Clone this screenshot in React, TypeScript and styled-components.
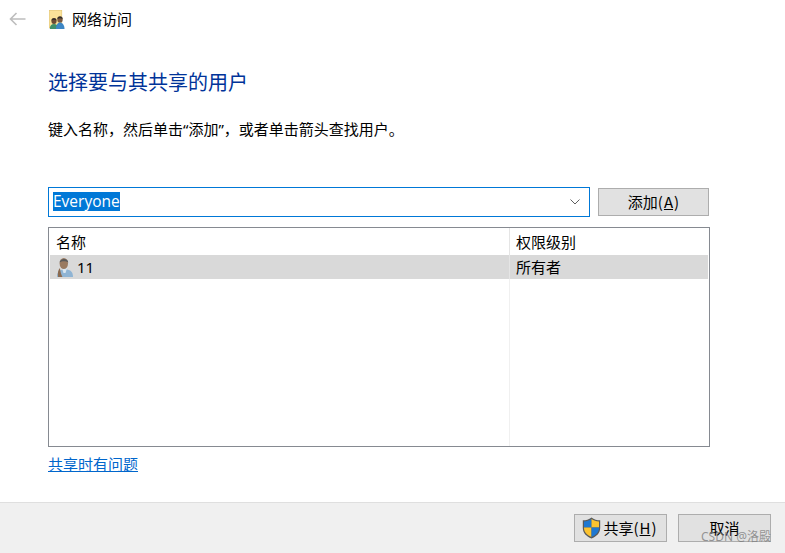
import { FC } from 'react';
import styled, { createGlobalStyle } from 'styled-components';

const GlobalStyle = createGlobalStyle`
  html, body {
    margin: 0;
    padding: 0;
    background: #fff;
  }
  body {
    font-family: 'Noto Sans', 'Noto Sans CJK SC', sans-serif;
    color: #000;
  }
`;

const Page = styled.div`
  position: relative;
  width: 785px;
  height: 553px;
  display: flex;
  flex-direction: column;
  overflow: hidden;
`;

const TitleBar = styled.div`
  height: 38px;
  padding-left: 9px;
  display: flex;
  align-items: center;
  flex-shrink: 0;
`;

const BackButton = styled.div`
  width: 17px;
  height: 14px;
  margin-right: 23px;
  color: #bdbdbd;
  display: flex;
`;

const TitleText = styled.span`
  margin-left: 7px;
  font-size: 15px;
  line-height: 18px;
`;

const Content = styled.div`
  flex: 1;
  padding: 31px 75px 0 48px;
  display: flex;
  flex-direction: column;
`;

const Heading = styled.h1`
  margin: 0;
  font-size: 20px;
  font-weight: 400;
  line-height: 28px;
  color: #003399;
`;

const Hint = styled.p`
  margin: 23px 0 0;
  font-size: 15px;
  line-height: 18px;
`;

const PickerRow = styled.div`
  margin-top: 49px;
  display: flex;
  align-items: center;
  gap: 8px;
`;

const Combo = styled.div`
  box-sizing: border-box;
  width: 542px;
  height: 30px;
  border: 1px solid #0078d7;
  padding: 0 9px 0 4px;
  display: flex;
  align-items: center;
  justify-content: space-between;
`;

const Selected = styled.span`
  background: #0078d7;
  color: #fff;
  font-family: 'Open Sans', 'Noto Sans', sans-serif;
  font-size: 15.5px;
  line-height: 19px;
  margin-top: -1px;
`;

const Button = styled.button<{ $wide?: boolean }>`
  box-sizing: border-box;
  width: ${(p) => (p.$wide ? '111px' : '93px')};
  height: 28px;
  padding: 0 0 2px;
  border: 1px solid #adadad;
  background: #e1e1e1;
  font-family: 'Noto Sans CJK SC', 'Noto Sans', sans-serif;
  font-size: 15px;
  color: #000;
  display: flex;
  align-items: center;
  justify-content: center;
  gap: 1px;
`;

const Hotkey = styled.span`
  text-decoration: underline;
`;

const ShieldSlot = styled.span`
  display: flex;
  margin: 2px 1px 0 -2px;
`;

const List = styled.div`
  box-sizing: border-box;
  width: 662px;
  height: 220px;
  margin-top: 10px;
  border: 1px solid #868a91;
  padding: 0 1px;
  display: flex;
  flex-direction: column;
`;

const ListRow = styled.div<{ $selected?: boolean }>`
  height: ${(p) => (p.$selected ? '24px' : '27px')};
  background: ${(p) => (p.$selected ? '#d9d9d9' : 'transparent')};
  display: grid;
  grid-template-columns: 459px 1fr;
  flex-shrink: 0;
`;

const Cell = styled.div<{ $second?: boolean }>`
  display: flex;
  align-items: center;
  padding-left: 6px;
  border-left: ${(p) => (p.$second ? '1px solid #e5e5e5' : 'none')};
  font-size: 15px;
  line-height: 18px;
`;

const UserName = styled.span`
  margin-left: 3px;
  font-size: 15px;
`;

const ListBody = styled.div`
  flex: 1;
  display: grid;
  grid-template-columns: 459px 1fr;
`;

const EmptyColumn = styled.div<{ $second?: boolean }>`
  border-left: ${(p) => (p.$second ? '1px solid #f0f0f0' : 'none')};
`;

const HelpLink = styled.a`
  align-self: flex-start;
  margin-top: 8px;
  font-size: 15px;
  line-height: 18px;
  color: #0066cc;
  text-decoration: underline;
`;

const Footer = styled.div`
  box-sizing: border-box;
  height: 51px;
  flex-shrink: 0;
  background: #f0f0f0;
  border-top: 1px solid #dfdfdf;
  padding: 11px 14px 0 0;
  display: flex;
  justify-content: flex-end;
  align-items: flex-start;
  gap: 11px;
`;

const Watermark = styled.span`
  position: absolute;
  right: 14px;
  bottom: 9px;
  font-family: 'Noto Sans', 'Noto Sans CJK SC', sans-serif;
  font-size: 12px;
  line-height: 14px;
  color: rgba(120, 120, 120, 0.75);
`;

const BackArrow: FC = () => (
  <svg width="17" height="14" viewBox="0 0 17 14" fill="none" stroke="currentColor" strokeWidth="1.6">
    <path d="M1.5 7H16.5M7.5 1L1.5 7L7.5 13" />
  </svg>
);

const NetworkIcon: FC = () => (
  <svg width="16" height="19" viewBox="0 0 16 19">
    <rect x="0.3" y="0.3" width="12.5" height="17.5" fill="#fbe39a" stroke="#e3c36a" strokeWidth="0.6" />
    <ellipse cx="5" cy="11" rx="2.6" ry="3" fill="#6b4a34" />
    <path d="M2.4 10.500C2.800 7.600 7.200 7.600 7.600 10.500C6 9.600 4 9.600 2.400 10.500z" fill="#33302c" />
    <path d="M0.800 19c0-3.500 1.600-5 4.200-5s4.200 1.500 4.200 5z" fill="#3f8f6a" />
    <ellipse cx="11" cy="9.500" rx="2.7" ry="3.2" fill="#7a5a42" />
    <path d="M8.300 9C8.700 5.800 13.300 5.800 13.700 9C12 8 10 8 8.300 9z" fill="#33302c" />
    <path d="M7 19c0-4 1.600-6.500 4-6.500s4.500 2.500 4.500 6.500z" fill="#3d86c4" />
  </svg>
);

const UserIcon: FC = () => (
  <svg width="18" height="21" viewBox="0 0 18 21">
    <path d="M1 20c0-5 2-7.500 8-7.500s8 2.500 8 7.500z" fill="#8fb4d4" />
    <path d="M6 11h5l-1.500 5h-2z" fill="#d9e6f0" />
    <ellipse cx="7.800" cy="6.500" rx="4.200" ry="5.500" fill="#9a7a60" />
    <path d="M3.500 5.500C4 1.500 11.500 0.500 12.300 5.500C10 3.800 6 3.800 3.500 5.500z" fill="#5a5a5a" />
    <path d="M4 11c.5 5 1.500 7 2.500 9H2C1.500 16 2.200 12.500 4 11z" fill="#8a6a50" />
  </svg>
);

const ChevronIcon: FC = () => (
  <svg width="10" height="6" viewBox="0 0 10 6" fill="none" stroke="#606060" strokeWidth="1">
    <path d="M0.5 0.500L5 5L9.500 0.500" />
  </svg>
);

const ShieldIcon: FC = () => (
  <svg width="19" height="22" viewBox="0 0 19 22">
    <path d="M9.500 0.500C7 2.500 4 3.300 0.800 3.300V11C0.800 16 4.500 19.500 9.500 21.500C14.500 19.500 18.200 16 18.200 11V3.300C15 3.300 12 2.500 9.500 0.500z" fill="#5a5a5a" />
    <path d="M9.500 2C7.300 3.600 4.800 4.300 2 4.400V10.500H9.500z" fill="#1f78d1" />
    <path d="M9.500 2C11.700 3.600 14.200 4.300 17 4.400V10.500H9.500z" fill="#fcc330" />
    <path d="M2 10.500H9.500V20C5.300 18.200 2 15.300 2 11z" fill="#fcc330" />
    <path d="M17 10.500H9.500V20C13.700 18.200 17 15.300 17 11z" fill="#1f78d1" />
  </svg>
);

export default function App() {
  return (
    <Page>
      <GlobalStyle />
      <TitleBar>
        <BackButton>
          <BackArrow />
        </BackButton>
        <NetworkIcon />
        <TitleText>网络访问</TitleText>
      </TitleBar>
      <Content>
        <Heading>选择要与其共享的用户</Heading>
        <Hint>键入名称，然后单击“添加”，或者单击箭头查找用户。</Hint>
        <PickerRow>
          <Combo>
            <Selected>Everyone</Selected>
            <ChevronIcon />
          </Combo>
          <Button $wide>
            添加(<Hotkey>A</Hotkey>)
          </Button>
        </PickerRow>
        <List>
          <ListRow>
            <Cell>名称</Cell>
            <Cell $second>权限级别</Cell>
          </ListRow>
          <ListRow $selected>
            <Cell>
              <UserIcon />
              <UserName>11</UserName>
            </Cell>
            <Cell $second>所有者</Cell>
          </ListRow>
          <ListBody>
            <EmptyColumn />
            <EmptyColumn $second />
          </ListBody>
        </List>
        <HelpLink>共享时有问题</HelpLink>
      </Content>
      <Footer>
        <Button>
          <ShieldSlot>
            <ShieldIcon />
          </ShieldSlot>
          共享(<Hotkey>H</Hotkey>)
        </Button>
        <Button>取消</Button>
      </Footer>
      <Watermark>CSDN @洛殿</Watermark>
    </Page>
  );
}
